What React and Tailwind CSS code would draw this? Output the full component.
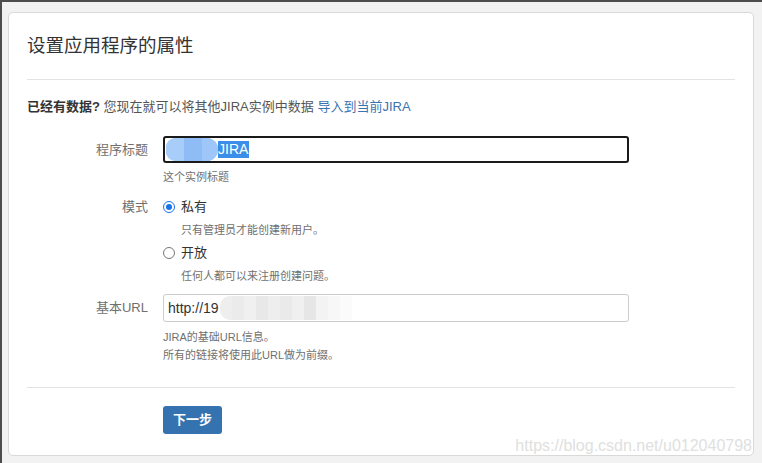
import React from 'react'

const font = { fontFamily: '"Liberation Sans", "Noto Sans CJK SC", sans-serif' }

const Radio = ({ checked }) => (
    <span
        className={`inline-flex items-center justify-center w-[12px] h-[12px] rounded-full border bg-white ${
            checked ? 'border-[#1a73e8]' : 'border-[#767676]'
        }`}
    >
        {checked && <span className="w-[6px] h-[6px] rounded-full bg-[#1a73e8]" />}
    </span>
)

const Row = ({ label, center = true, children }) => (
    <div className={`flex ${center ? 'items-center' : 'items-start'}`}>
        <div className="w-[121px] shrink-0 pr-0 text-right text-[13px] leading-[20px] text-[#707070]">{label}</div>
        <div className="ml-[15px] flex-1">{children}</div>
    </div>
)

const Hint = ({ children, className = '' }) => (
    <p className={`text-[11px] leading-[18px] text-[#707070] ${className}`}>{children}</p>
)

// mosaic that covers the blurred address
const mosaic = ['#eeeeee', '#ebebeb', '#f0f0f0', '#e8e8e8', '#eeeeee', '#eaeaea', '#f0f0f0', '#e6e6e6', '#f3f3f3', '#f7f7f7', '#fbfbfb']

export default function App() {
    return (
        <div style={font} className="relative w-[762px] h-[463px] bg-[#f2f2f2] border-t-2 border-l-2 border-[#4d4d4d] overflow-hidden">
            <div className="ml-[6px] mt-[10px] w-[746px] h-[444px] bg-white border border-[#d9d9d9] rounded-[5px] pt-[19px] pl-[18px] pr-[18px]">
                <h1 className="text-[18.5px] leading-[28px] text-[#333]">设置应用程序的属性</h1>
                <div className="mt-[19px] h-px bg-[#e3e3e3]" />

                <p className="mt-[17px] text-[13px] leading-[20px] text-[#555]">
                    <span className="font-bold text-[#333]">已经有数据?</span> 您现在就可以将其他JIRA实例中数据{' '}
                    <a className="text-[#3b73af]">导入到当前JIRA</a>
                </p>

                <div className="mt-[19px]">
                    <Row label="程序标题">
                        <div className="w-[466px] h-[27px] border-2 border-[#1a1a1a] rounded-[3px] flex items-center pl-[1px]">
                            <span className="h-[23px] w-[52px] rounded-l-[10px] rounded-r-[12px] bg-[#9cc4f7] flex">
                                <span className="w-[18px] h-full bg-[#a9cdf9] rounded-l-[10px]" />
                                <span className="w-[18px] h-full bg-[#8fbcf5]" />
                                <span className="w-[16px] h-full bg-[#9fc6f8] rounded-r-[12px]" />
                            </span>
                            <span className="bg-[#3a8ee8] text-white text-[14px] leading-[17px] pr-[1px]">JIRA</span>
                        </div>
                    </Row>
                    <Row label="">
                        <Hint className="mt-[5px]">这个实例标题</Hint>
                    </Row>
                </div>

                <div className="mt-[11px]">
                    <Row label="模式">
                        <label className="flex items-center gap-[6px] text-[13px] leading-[20px] text-[#333]">
                            <Radio checked />
                            私有
                        </label>
                    </Row>
                    <Row label="">
                        <Hint className="mt-[4px] pl-[18px]">只有管理员才能创建新用户。</Hint>
                        <label className="mt-[4px] flex items-center gap-[6px] text-[13px] leading-[20px] text-[#333]">
                            <Radio />
                            开放
                        </label>
                        <Hint className="mt-[4px] pl-[18px]">任何人都可以来注册创建问题。</Hint>
                    </Row>
                </div>

                <div className="mt-[9px]">
                    <Row label="基本URL">
                        <div className="w-[466px] h-[28px] border border-[#cccccc] rounded-[3px] flex items-center pl-[4px]">
                            <span className="text-[14px] text-[#333]">http://19</span>
                            <span className="flex h-[24px] ml-[1px]">
                                {mosaic.map((c, i) => (
                                    <span
                                        key={i}
                                        className={`w-[12px] h-full ${i === 0 ? 'rounded-l-[10px]' : ''}`}
                                        style={{ backgroundColor: c }}
                                    />
                                ))}
                            </span>
                        </div>
                    </Row>
                    <Row label="">
                        <Hint className="mt-[6px]">JIRA的基础URL信息。</Hint>
                        <Hint>所有的链接将使用此URL做为前缀。</Hint>
                    </Row>
                </div>

                <div className="mt-[23px] h-px bg-[#e3e3e3]" />

                <div className="mt-[18px] pl-[136px]">
                    <button className="w-[59px] h-[28px] rounded-[3px] bg-[#3572b0] text-white text-[13px] font-bold">
                        下一步
                    </button>
                </div>
            </div>

            <span className="absolute right-[10px] top-[434px] text-[16px] leading-[20px] text-[#e0e0e0]">
                https://blog.csdn.net/u012040798
            </span>
        </div>
    )
}
